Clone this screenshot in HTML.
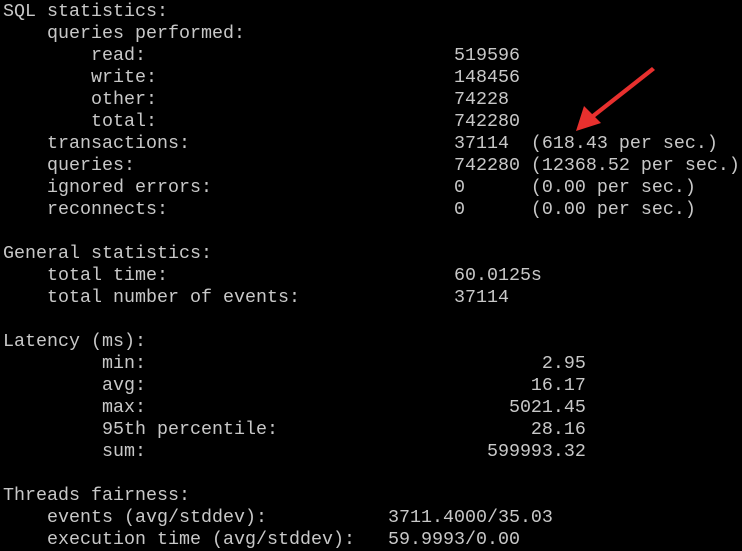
<!DOCTYPE html>
<html><head><style>
html,body{margin:0;padding:0;background:#000;width:742px;height:550px;overflow:hidden}
pre{margin:0;position:absolute;left:3px;top:1px;font-family:"Liberation Mono",monospace;font-size:18.33px;line-height:22px;color:#c8c8c8;white-space:pre}
svg{position:absolute;left:0;top:0}
</style></head><body>
<pre>SQL statistics:
    queries performed:
        read:                            519596
        write:                           148456
        other:                           74228
        total:                           742280
    transactions:                        37114  (618.43 per sec.)
    queries:                             742280 (12368.52 per sec.)
    ignored errors:                      0      (0.00 per sec.)
    reconnects:                          0      (0.00 per sec.)

General statistics:
    total time:                          60.0125s
    total number of events:              37114

Latency (ms):
         min:                                    2.95
         avg:                                   16.17
         max:                                 5021.45
         95th percentile:                       28.16
         sum:                               599993.32

Threads fairness:
    events (avg/stddev):           3711.4000/35.03
    execution time (avg/stddev):   59.9993/0.00</pre>
<svg width="742" height="550"><polygon points="652,67 655,70 594,118 591,115" fill="#e8302e"/><polygon points="576,131 584,106 601,123" fill="#e8302e"/></svg>
</body></html>
